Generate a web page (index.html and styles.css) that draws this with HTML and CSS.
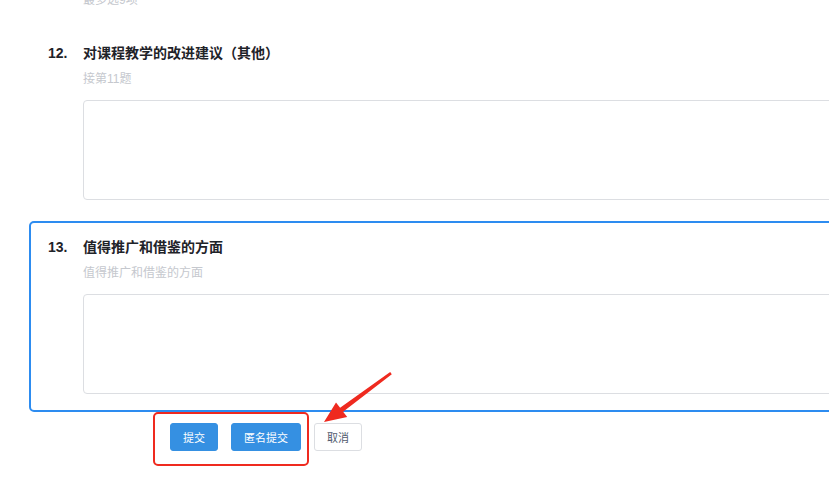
FILE: index.html
```html
<!DOCTYPE html>
<html lang="zh-CN">
<head>
    <meta charset="UTF-8">
    <meta name="viewport" content="width=device-width, initial-scale=1.0">
    <title>问卷</title>
    <link rel="stylesheet" href="styles.css">
</head>
<body>
    <div class="page">
        <div class="question tail">
            <div class="q-num"></div>
            <div class="q-body">
                <div class="q-hint">最多选9项</div>
            </div>
        </div>

        <div class="question">
            <div class="q-num">12.</div>
            <div class="q-body">
                <div class="q-title">对课程教学的改进建议（其他）</div>
                <div class="q-hint">接第11题</div>
                <textarea class="q-input"></textarea>
            </div>
        </div>

        <div class="question active">
            <div class="q-num">13.</div>
            <div class="q-body">
                <div class="q-title">值得推广和借鉴的方面</div>
                <div class="q-hint">值得推广和借鉴的方面</div>
                <textarea class="q-input"></textarea>
            </div>
        </div>

        <div class="actions">
            <button class="btn btn-primary">提交</button>
            <button class="btn btn-primary">匿名提交</button>
            <button class="btn btn-default">取消</button>
        </div>
    </div>

    <!-- 标注 -->
    <div class="mark-box"></div>
    <svg class="mark-arrow" width="829" height="482" viewBox="0 0 829 482">
        <polygon fill="#ef2a1f" points="390.2,372 340.1,407.8 336,402.4 324,422 347.2,417 343.1,411.8 391.8,374.2"/>
    </svg>
</body>
</html>
```

FILE: styles.css
```css
body {
    margin: 0;
    background-color: #fff;
    font-family: "Liberation Sans", "Noto Sans CJK SC", sans-serif;
    color: #1f2329;
    overflow: hidden;
    height: 482px;
}

.page {
    padding-left: 29px;
}

.question {
    display: flex;
    width: 900px;
    box-sizing: border-box;
    border: 2px solid transparent;
    border-radius: 5px;
    padding: 14px 0 16px 17px;
    margin-top: 3px;
}

.question.tail {
    margin-top: -11px;
    padding-top: 0;
    padding-bottom: 12px;
}

.question.active {
    border-color: #2d8cf0;
}

.q-num {
    width: 35px;
    flex-shrink: 0;
    font-size: 14px;
    font-weight: bold;
    line-height: 20px;
}

.q-body {
    flex: 1;
    display: flex;
    flex-direction: column;
}

.q-title {
    font-size: 14px;
    font-weight: bold;
    line-height: 20px;
}

.q-hint {
    margin-top: 7px;
    font-size: 12px;
    line-height: 19px;
    color: #c5c8ce;
}

.tail .q-hint {
    margin-top: 0;
}

.q-input {
    margin-top: 11px;
    height: 100px;
    box-sizing: border-box;
    border: 1px solid #dcdee2;
    border-radius: 4px;
    resize: none;
    font-family: inherit;
    outline: none;
}

.actions {
    display: flex;
    gap: 13px;
    margin-top: 11px;
    padding-left: 141px;
}

.btn {
    height: 28px;
    padding: 0 12px;
    font-size: 11px;
    font-family: "Noto Sans CJK SC", sans-serif;
    border-radius: 3px;
    cursor: pointer;
}

.btn-primary {
    background-color: #3590e2;
    border: 1px solid #3590e2;
    color: #fff;
}

.btn-default {
    background-color: #fff;
    border: 1px solid #dcdee2;
    color: #515a6e;
}

.mark-box {
    position: absolute;
    left: 153px;
    top: 412px;
    width: 156px;
    height: 54px;
    box-sizing: border-box;
    border: 2px solid #ef2a1f;
    border-radius: 5px;
    pointer-events: none;
}

.mark-arrow {
    position: absolute;
    left: 0;
    top: 0;
    pointer-events: none;
}
```
